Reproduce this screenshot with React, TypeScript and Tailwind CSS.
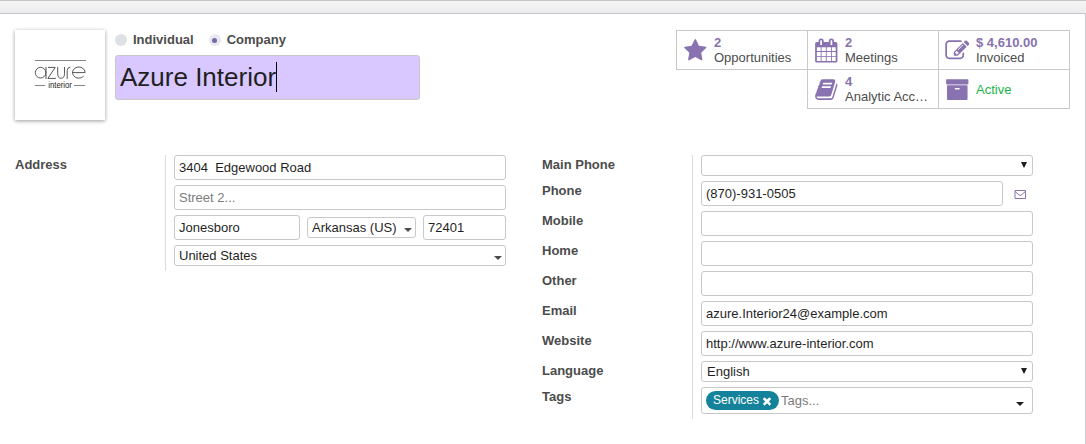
import React from "react";

const ICONS = {
  star: "M1728 647q0 22-26 48l-363 354 86 500q1 7 1 20 0 21-10.5 35.5t-30.5 14.5q-19 0-40-12l-449-236-449 236q-22 12-40 12-21 0-31.5-14.5t-10.5-35.5q0-6 2-20l86-500-364-354q-25-27-25-48 0-37 56-46l502-73 225-455q19-41 49-41t49 41l225 455 502 73q56 9 56 46z",
  calendar:
    "M192 1664h288v-288h-288v288zm352 0h320v-288h-320v288zm-352-352h288v-320h-288v320zm352 0h320v-320h-320v320zm-352-384h288v-288h-288v288zm736 736h320v-288h-320v288zm-384-736h320v-288h-320v288zm768 736h288v-288h-288v288zm-384-352h320v-320h-320v320zm-352-864v-288q0-13-9.5-22.5t-22.5-9.5h-64q-13 0-22.5 9.5t-9.5 22.5v288q0 13 9.5 22.5t22.5 9.5h64q13 0 22.5-9.5t9.5-22.5zm736 864h288v-320h-288v320zm-384-384h320v-288h-320v288zm384 0h288v-288h-288v288zm32-480v-288q0-13-9.5-22.5t-22.5-9.5h-64q-13 0-22.5 9.5t-9.5 22.5v288q0 13 9.5 22.5t22.5 9.5h64q13 0 22.5-9.5t9.5-22.5zm384-64v1280q0 52-38 90t-90 38h-1408q-52 0-90-38t-38-90v-1280q0-52 38-90t90-38h128v-96q0-66 47-113t113-47h64q66 0 113 47t47 113v96h384v-96q0-66 47-113t113-47h64q66 0 113 47t47 113v96h128q52 0 90 38t38 90z",
  edit: "M888 1184l116-116-152-152-116 116v56h96v96h56zm440-720q-16-16-33 1l-350 350q-17 17-1 33t33-1l350-350q17-17 1-33zm80 594v190q0 119-84.5 203.5t-203.5 84.5h-832q-119 0-203.5-84.5t-84.5-203.5v-832q0-119 84.5-203.5t203.5-84.5h832q63 0 117 25 15 7 18 23 3 17-9 29l-49 49q-14 14-32 8-23-6-45-6h-832q-66 0-113 47t-47 113v832q0 66 47 113t113 47h832q66 0 113-47t47-113v-126q0-13 9-22l64-64q15-15 35-7t20 29zm-96-738l288 288-672 672h-288v-288zm444 132l-92 92-288-288 92-92q28-28 68-28t68 28l152 152q28 28 28 68t-28 68z",
  book: "M1703 478q40 57 18 129l-275 906q-19 64-76.5 107.5t-122.5 43.5h-923q-77 0-148.5-53.5t-99.5-131.5q-24-67-2-127 0-4 3-27t4-37q1-8-3-21.5t-3-19.5q2-11 8-21t16.5-23.5 16.5-23.5q23-38 45-91.5t30-91.5q3-10 .5-30t-.5-28q3-11 17-28t17-23q21-36 42-92t25-90q1-9-2.5-32t.5-28q4-13 22-30.5t22-22.5q19-26 42.5-84.5t27.5-96.5q1-8-3-25.5t-2-26.5q2-8 9-18t18-23 17-21q8-12 16.5-30.5t15-35 16-36 19.5-32 26.5-23.5 36-11.5 47.5 5.5l-1 3q38-9 51-9h761q74 0 114 56t18 130l-274 906q-36 119-71.5 153.5t-128.5 34.5h-869q-27 0-38 15-11 16-1 43 24 70 144 70h923q29 0 56-15.5t35-41.5l300-987q7-22 5-57 38 15 59 43zm-1064 2q-4 13 2 22.5t20 9.5h608q13 0 25.5-9.5t16.5-22.5l21-64q4-13-2-22.5t-20-9.5h-608q-13 0-25.5 9.5t-16.5 22.5zm-83 256q-4 13 2 22.5t20 9.5h608q13 0 25.5-9.5t16.5-22.5l21-64q4-13-2-22.5t-20-9.5h-608q-13 0-25.5 9.5t-16.5 22.5z",
  archive:
    "M1088 832q0-26-19-45t-45-19h-256q-26 0-45 19t-19 45 19 45 45 19h256q26 0 45-19t19-45zm576-192v960q0 26-19 45t-45 19h-1408q-26 0-45-19t-19-45v-960q0-26 19-45t45-19h1408q26 0 45 19t19 45zm64-448v256q0 26-19 45t-45 19h-1536q-26 0-45-19t-19-45v-256q0-26 19-45t45-19h1536q26 0 45 19t19 45z",
  times:
    "M1490 1322q0 40-28 68l-136 136q-28 28-68 28t-68-28l-294-294-294 294q-28 28-68 28t-68-28l-136-136q-28-28-28-68t28-68l294-294-294-294q-28-28-28-68t28-68l136-136q28-28 68-28t68 28l294 294 294-294q28-28 68-28t68 28l136 136q28 28 28 68t-28 68l-294 294 294 294q28 28 28 68z",
};

function Icon({ name, className, viewBox = "0 0 1792 1792" }: { name: keyof typeof ICONS; className: string; viewBox?: string }) {
  return (
    <svg viewBox={viewBox} fill="currentColor" className={className}>
      <path d={ICONS[name]} />
    </svg>
  );
}

function Stat({ icon, value, label }: { icon: keyof typeof ICONS; value?: string; label: string }) {
  return (
    <div className="flex h-[39px] items-start border-b border-l border-[#c9c9cc] pl-[6px]">
      <Icon name={icon} viewBox="-20 -45 1792 1792" className="mt-[7px] h-6 w-6 shrink-0 overflow-visible text-[#8872b0]" />
      <div className="ml-[7px] leading-[15px]">
        {value ? (
          <>
            <div className="mt-1 font-bold text-[#8872b0]">{value}</div>
            <div className="whitespace-nowrap">{label}</div>
          </>
        ) : (
          <div className="mt-3 text-[#1bb44b]">{label}</div>
        )}
      </div>
    </div>
  );
}

function Caret({ className = "" }: { className?: string }) {
  return (
    <svg viewBox="0 0 8 4" className={"h-1 w-2 shrink-0 " + className} fill="currentColor">
      <path d="M0 0h8L4 4z" />
    </svg>
  );
}

function Field({ value = "", placeholder, className = "w-[332px]" }: { value?: string; placeholder?: string; className?: string }) {
  return (
    <div className={"flex h-[25px] items-center whitespace-pre rounded-[3px] border border-[#c8c8c8] px-1 text-[#1f1f1f] " + className}>
      {value || <span className="text-[#7b7b7b]">{placeholder}</span>}
    </div>
  );
}

function Combo({ value, className = "w-[332px]" }: { value: string; className?: string }) {
  return (
    <div className={"flex h-[21px] items-center justify-between rounded-[3px] border border-[#c8c8c8] pl-1 pr-[3px] text-[#1f1f1f] " + className}>
      <span>{value}</span>
      <Caret className="mt-[5px] text-[#4c4c4c]" />
    </div>
  );
}

function Select({ value = "" }: { value?: string }) {
  return (
    <div className="flex h-[21px] w-[332px] items-center justify-between rounded-[3px] border border-[#c8c8c8] pl-[5px] pr-[5px] text-[#1f1f1f]">
      <span>{value}</span>
      <svg viewBox="0 0 6 6" className="mb-px h-1.5 w-1.5" fill="currentColor">
        <path d="M0 0h6L3.4 5.6h-.8z" />
      </svg>
    </div>
  );
}

function Row({ label, children }: { label: string; children: React.ReactNode }) {
  return (
    <div className="flex">
      <div className="w-[150px] pt-0.5 font-bold leading-4">{label}</div>
      <div className="border-l border-[#dcdcdc] pb-[5px] pl-2">{children}</div>
    </div>
  );
}

function Logo() {
  return (
    <div className="flex h-[90px] w-[90px] items-center justify-center bg-white shadow-[0_1px_4px_rgba(0,0,0,0.4)]">
      <svg viewBox="0 0 90 90" className="h-[90px] w-[90px]" fill="none" stroke="#444" strokeWidth=".9">
        <path d="M20 30.5h51M20 55.5h10M59 55.5h11" stroke="#777" />
        <circle cx="25.6" cy="42.7" r="5.3" />
        <path d="M31 36.8V49M33 37.4h7.2L32.9 48.4h8M42.7 37v6.6q0 4.7 3.4 4.7t3.4-4.7V37M52.2 49v-8.4q0-3.3 3.2-3.5" />
        <path d="M57.4 42.6h12.7a6.3 5.6 0 1 0-1.5 3.6" />
        <text x="33.3" y="57.8" fontFamily="Liberation Sans" fontSize="8.8" textLength="23.5" lengthAdjust="spacingAndGlyphs" stroke="none" fill="#222">
          interior
        </text>
      </svg>
    </div>
  );
}

export default function App() {
  return (
    <div className="flex h-[444px] w-[1086px] flex-col overflow-hidden bg-white font-['Liberation_Sans',Arial,sans-serif] text-[13px] leading-[15px] text-[#4c4c4c]">
      <div className="h-[13px] shrink-0 border-t border-[#c6c6c6] bg-linear-to-b from-[#f5f5f5] to-[#ececec]" />
      <div className="flex-1 border-r border-t border-[#c8c8d0] pl-[15px] pr-[15px] pt-4">
        <div className="flex h-[125px] items-start">
          <Logo />
          <div className="ml-[10px] w-[305px]">
            <div className="flex h-5 items-center font-bold">
              <span className="h-3 w-3 rounded-full bg-[#dee2e6]" />
              <span className="mb-px ml-[6px]">Individual</span>
              <span className="ml-[15px] flex h-3 w-3 items-center justify-center rounded-full bg-[#e6e9ed]">
                <span className="h-[5px] w-[5px] rounded-full bg-[#7c66aa]" />
              </span>
              <span className="mb-px ml-[6px]">Company</span>
            </div>
            <div className="mt-[5px] flex h-[45px] items-start rounded-[3px] border border-[#c8c8c8] bg-[#d9c8ff] pl-1 pt-[6px] text-[26px] leading-[30px] text-[#1f1f1f]">
              <span>Azure Interior</span>
              <span className="h-[30px] w-px bg-black" />
            </div>
          </div>
          <div className="ml-auto grid w-[394px] grid-cols-3 border-r border-t border-[#c9c9cc]">
            <Stat icon="star" value="2" label="Opportunities" />
            <Stat icon="calendar" value="2" label="Meetings" />
            <Stat icon="edit" value="$ 4,610.00" label="Invoiced" />
            <div />
            <Stat icon="book" value="4" label="Analytic Acc…" />
            <Stat icon="archive" label="Active" />
          </div>
        </div>
        <div className="flex items-start">
          <div className="w-[527px]">
            <Row label="Address">
              <div className="flex flex-col gap-[5px]">
                <Field value="3404  Edgewood Road" />
                <Field placeholder="Street 2..." />
                <div className="flex items-center">
                  <Field value="Jonesboro" className="w-[126px]" />
                  <Combo value="Arkansas (US)" className="ml-[7px] w-[109px]" />
                  <Field value="72401" className="ml-[7px] w-[83px]" />
                </div>
                <Combo value="United States" />
              </div>
            </Row>
          </div>
          <div>
            <Row label="Main Phone"><Select /></Row>
            <Row label="Phone">
              <div className="flex items-center">
                <Field value="(870)-931-0505" className="w-[302px]" />
                <svg viewBox="0 0 13 10" className="ml-[11px] mt-px h-[10px] w-[13px]" fill="none" stroke="#8872b0">
                  <path d="M1 1.5h10.5v8H1zM1.2 2.6l4 3.5q1 .8 2 0l4-3.5" />
                </svg>
              </div>
            </Row>
            <Row label="Mobile"><Field /></Row>
            <Row label="Home"><Field /></Row>
            <Row label="Other"><Field /></Row>
            <Row label="Email"><Field value="azure.Interior24@example.com" /></Row>
            <Row label="Website"><Field value="http://www.azure-interior.com" /></Row>
            <Row label="Language"><Select value="English" /></Row>
            <Row label="Tags">
              <div className="flex h-[27px] w-[332px] items-center rounded-[3px] border border-[#c8c8c8] pl-1 pr-2">
                <div className="flex h-[19px] w-[73px] items-center rounded-full bg-[#14829b] pl-[7px] text-xs text-white">
                  <span className="-mt-0.5">Services</span>
                  <Icon name="times" className="ml-[2px] h-3 w-3" />
                </div>
                <span className="ml-[2px] text-[#7b7b7b]">Tags...</span>
                <Caret className="ml-auto mt-[7px] text-[#1f1f1f]" />
              </div>
            </Row>
          </div>
        </div>
      </div>
    </div>
  );
}
